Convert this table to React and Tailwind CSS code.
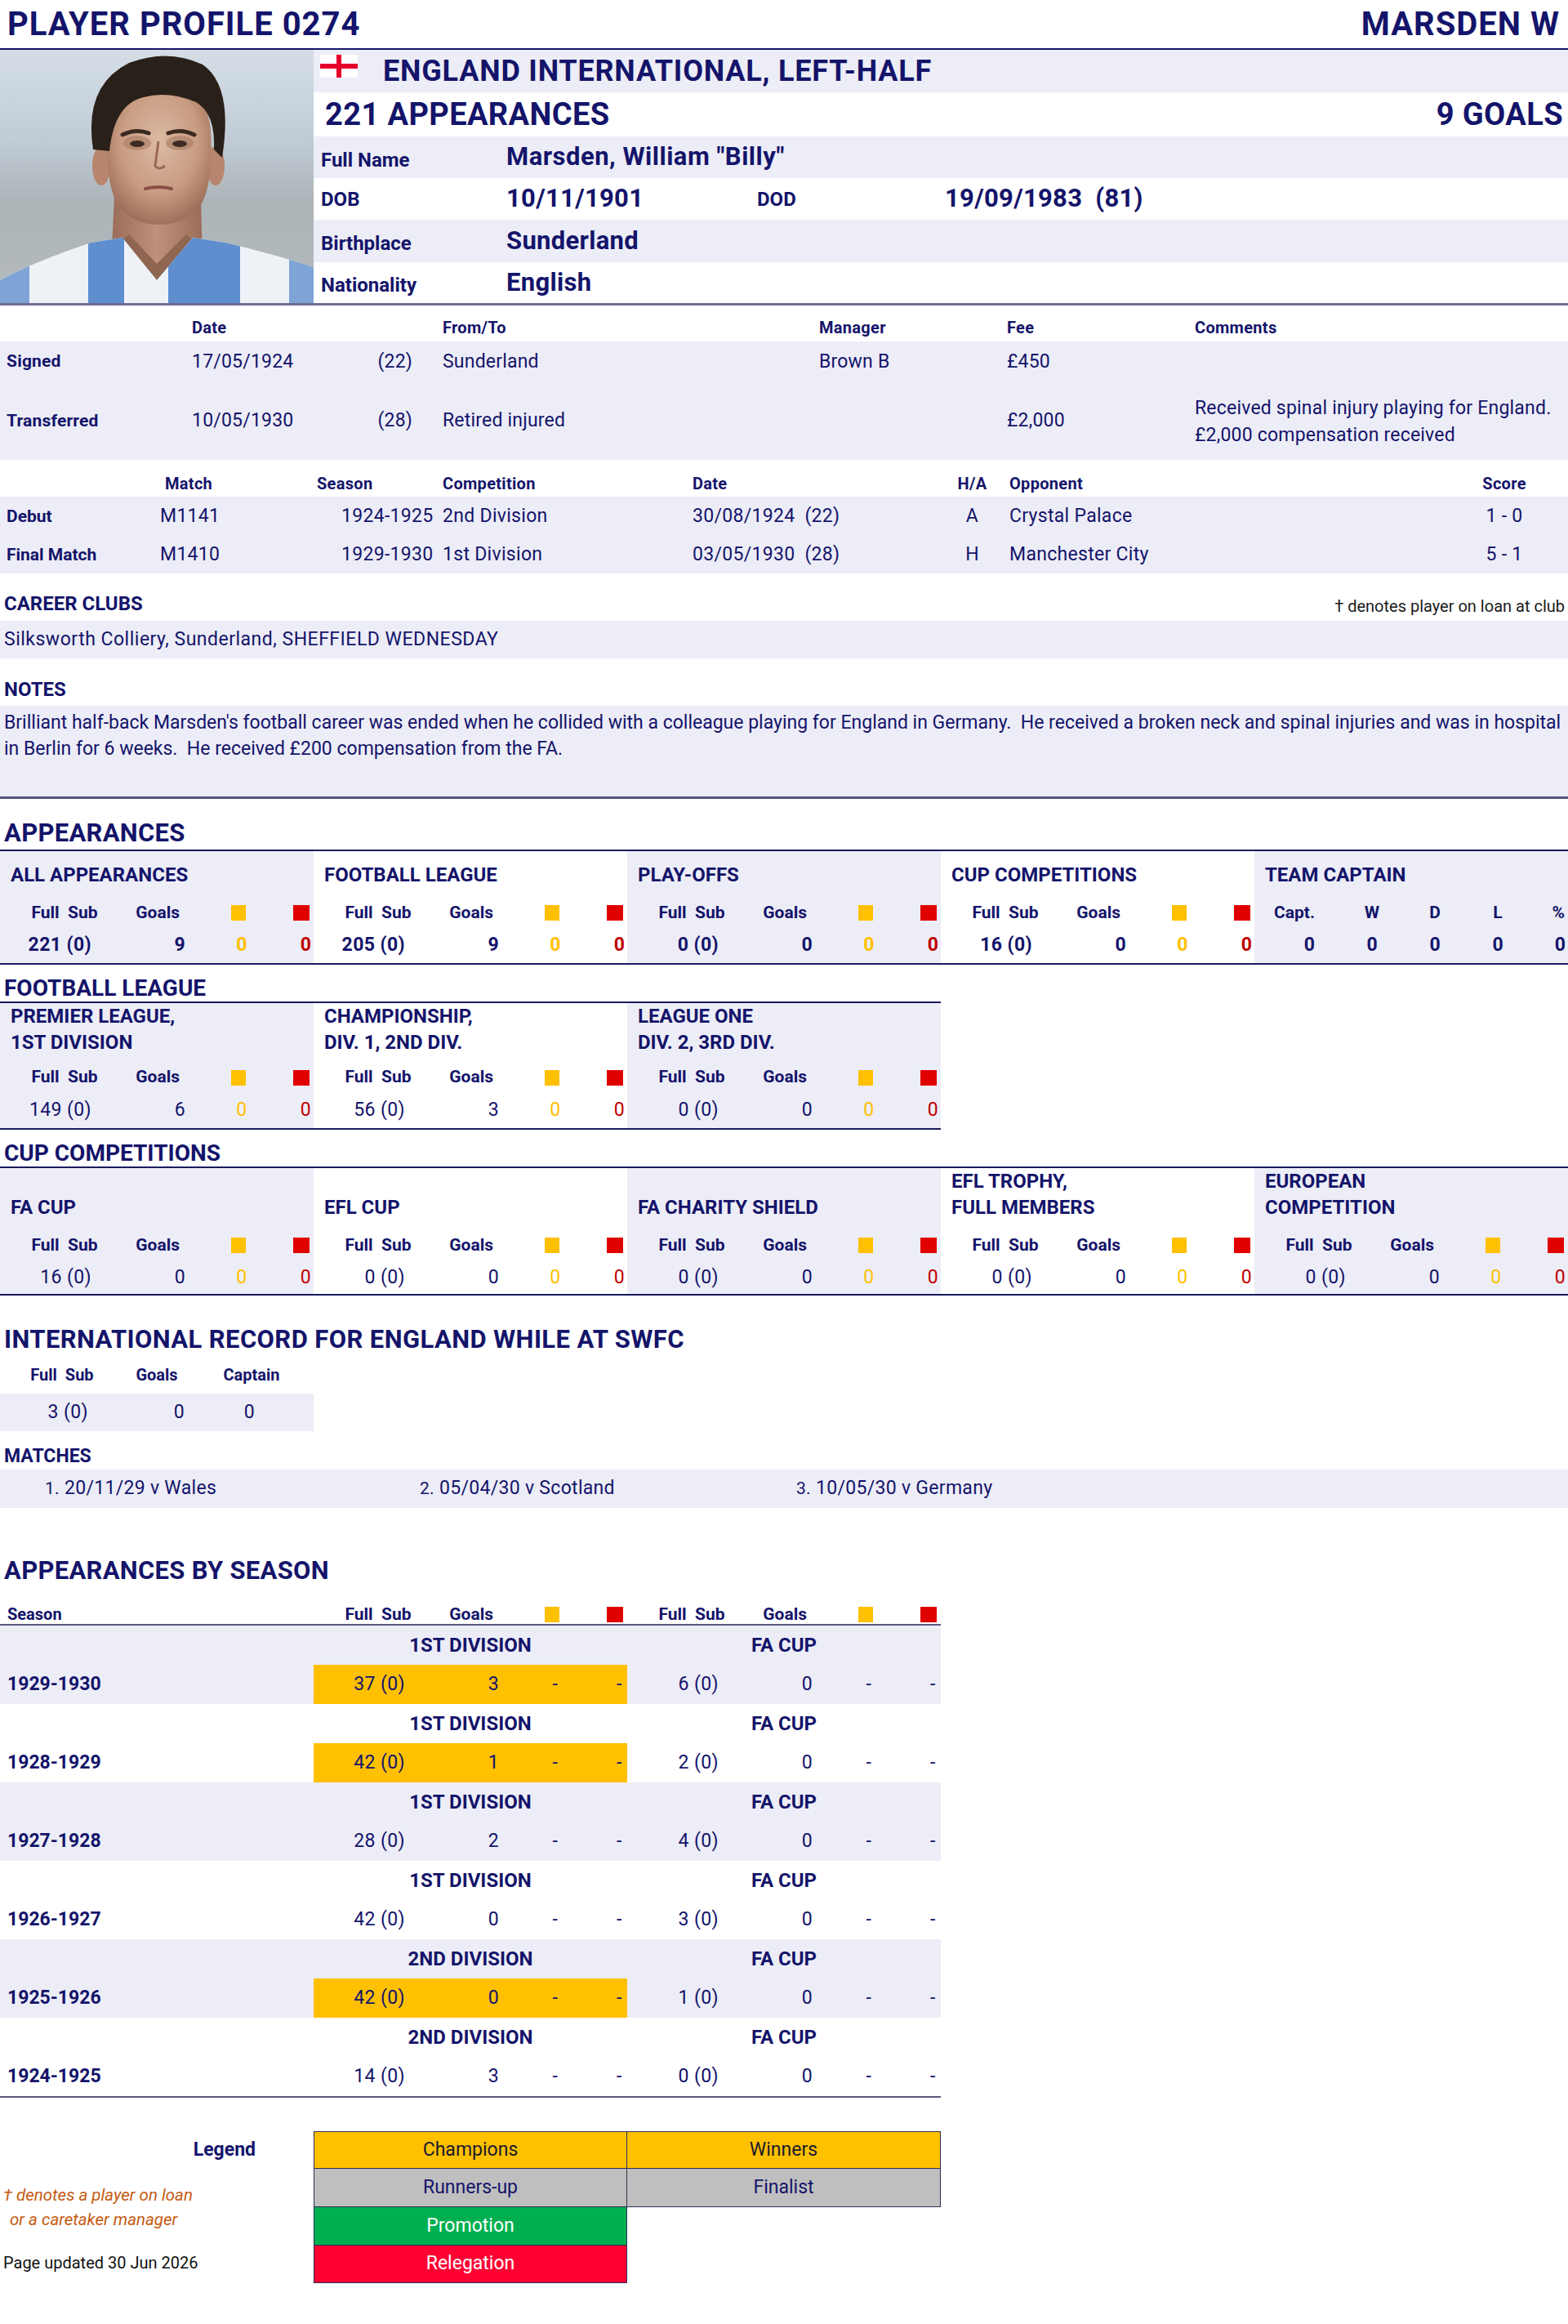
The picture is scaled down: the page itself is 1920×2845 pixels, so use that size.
import React from "react";

const Portrait = () => (
  <svg viewBox="0 0 384 310" className="block h-full w-full">
    <defs>
      <linearGradient id="pbg" x1="0" y1="0" x2="0" y2="1">
        <stop offset="0" stopColor="#d5dee7" />
        <stop offset="0.35" stopColor="#c1ccd6" />
        <stop offset="0.6" stopColor="#adb4b8" />
        <stop offset="1" stopColor="#b4babd" />
      </linearGradient>
      <radialGradient id="pskin" cx="0.5" cy="0.4" r="0.62">
        <stop offset="0" stopColor="#dcbaa3" />
        <stop offset="0.6" stopColor="#c89c82" />
        <stop offset="1" stopColor="#9c6c57" />
      </radialGradient>
      <linearGradient id="pneck" x1="0" y1="0" x2="1" y2="0">
        <stop offset="0" stopColor="#9a6d58" />
        <stop offset="0.5" stopColor="#c0917a" />
        <stop offset="1" stopColor="#9a6d58" />
      </linearGradient>
      <clipPath id="pshirt">
        <path d="M0 282 Q45 258 112 236 L150 230 L192 282 L236 230 L276 236 Q335 250 384 266 L384 310 L0 310 Z" />
      </clipPath>
    </defs>
    <rect width="384" height="310" fill="url(#pbg)" />
    <path d="M140 180 L136 262 L248 262 L246 180 Z" fill="url(#pneck)" />
    <path d="M150 232 L192 282 L236 232 L228 226 L192 262 L158 226 Z" fill="#8f6652" />
    <g clipPath="url(#pshirt)">
      <rect width="384" height="310" fill="#eef2f7" />
      <rect x="0" y="200" width="36" height="110" fill="#7ea4d6" />
      <rect x="108" y="200" width="44" height="110" fill="#5f8ecf" />
      <rect x="206" y="200" width="88" height="110" fill="#5f8ecf" />
      <rect x="354" y="200" width="30" height="110" fill="#7ea4d6" />
    </g>
    <ellipse cx="124" cy="142" rx="11" ry="24" fill="#b8866f" />
    <ellipse cx="264" cy="142" rx="11" ry="24" fill="#b8866f" />
    <path d="M132 96 Q132 46 194 44 Q256 46 258 100 Q262 160 246 190 Q226 214 194 214 Q162 214 144 190 Q128 160 132 96 Z" fill="url(#pskin)" />
    <path d="M114 122 Q102 44 158 16 Q206 -2 248 18 Q286 44 272 132 L262 122 Q264 78 240 64 Q206 50 176 58 Q140 66 134 124 Z" fill="#2a201a" />
    <ellipse cx="168" cy="114" rx="17" ry="9" fill="#a97a63" opacity="0.6" />
    <ellipse cx="220" cy="114" rx="17" ry="9" fill="#a97a63" opacity="0.6" />
    <path d="M150 104 Q166 96 182 102" stroke="#3a2a22" strokeWidth="5" fill="none" strokeLinecap="round" />
    <path d="M206 102 Q222 96 238 104" stroke="#3a2a22" strokeWidth="5" fill="none" strokeLinecap="round" />
    <ellipse cx="168" cy="115" rx="9" ry="4" fill="#3f2b23" />
    <ellipse cx="220" cy="115" rx="9" ry="4" fill="#3f2b23" />
    <path d="M194 112 L190 142 Q194 148 202 142" stroke="#9a6a55" strokeWidth="3" fill="none" />
    <path d="M178 170 Q194 166 210 170" stroke="#8a4f44" strokeWidth="4" fill="none" strokeLinecap="round" />
  </svg>
);

const Flag = () => (
  <svg width="46" height="28" viewBox="0 0 46 28" className="shrink-0">
    <rect width="46" height="28" fill="#ffffff" />
    <rect x="20" width="6" height="28" fill="#e4002b" />
    <rect y="11" width="46" height="6" fill="#e4002b" />
  </svg>
);

const StatHead = () => (
  <div className="flex items-center text-[21px] font-bold">
    <span className="w-[158px] whitespace-pre text-center">Full  Sub</span>
    <span className="w-[62px] text-right">Goals</span>
    <span className="ml-[63px] h-[19px] w-[18px] bg-[#ffc000]" />
    <span className="ml-[58px] h-[19px] w-[20px] bg-[#e00000]" />
  </div>
);

const StatVals = ({ apps, goals, y = "0", r = "0", bold, dash }) => (
  <div className={"flex items-center text-[23px] tracking-[0.4px] " + (bold ? "font-bold" : "")}>
    <span className="w-[112px] text-right">{apps}</span>
    <span className="w-[115px] text-right">{goals}</span>
    <span className={"w-[138px] text-center " + (dash ? "" : "text-[#ffc000]")}>{y}</span>
    <span className={"w-[19px] text-center " + (dash ? "" : "text-[#c00000]")}>{r}</span>
  </div>
);

const TopPanel = ({ title, bg, apps, goals }) => (
  <div className={"w-[384px] " + bg}>
    <div className="flex h-[58px] items-center pl-[13px] text-[24px] font-bold">{title}</div>
    <div className="flex h-[35px] items-center">
      <StatHead />
    </div>
    <div className="flex h-[44px] items-center">
      <StatVals apps={apps} goals={goals} bold />
    </div>
  </div>
);

const SubPanel = ({ lines, bg, apps, goals }) => (
  <div className={"w-[384px] " + bg}>
    <div className="flex h-[72px] flex-col pl-[13px] text-[24px] font-bold leading-[32px]">
      {lines.map((l) => (
        <span key={l}>{l}</span>
      ))}
    </div>
    <div className="flex h-[38px] items-center">
      <StatHead />
    </div>
    <div className="flex h-[43px] items-center">
      <StatVals apps={apps} goals={goals} />
    </div>
  </div>
);

const CupPanel = ({ lines, bg, apps, goals }) => (
  <div className={"w-[384px] " + bg}>
    <div className="flex h-[64px] flex-col justify-end pl-[13px] text-[24px] font-bold leading-[32px]">
      {lines.map((l) => (
        <span key={l}>{l}</span>
      ))}
    </div>
    <div className="flex h-[51px] items-end pb-[5px]">
      <StatHead />
    </div>
    <div className="flex h-[39px] items-center">
      <StatVals apps={apps} goals={goals} />
    </div>
  </div>
);

const seasons = [
  { s: "1929-1930", div: "1ST DIVISION", lg: ["37 (0)", "3"], cup: ["6 (0)", "0"], hl: true },
  { s: "1928-1929", div: "1ST DIVISION", lg: ["42 (0)", "1"], cup: ["2 (0)", "0"], hl: true },
  { s: "1927-1928", div: "1ST DIVISION", lg: ["28 (0)", "2"], cup: ["4 (0)", "0"] },
  { s: "1926-1927", div: "1ST DIVISION", lg: ["42 (0)", "0"], cup: ["3 (0)", "0"] },
  { s: "1925-1926", div: "2ND DIVISION", lg: ["42 (0)", "0"], cup: ["1 (0)", "0"], hl: true },
  { s: "1924-1925", div: "2ND DIVISION", lg: ["14 (0)", "3"], cup: ["0 (0)", "0"] },
];

const Heading = ({ children, className }) => (
  <div className={"flex items-end pl-[5px] font-bold " + className}>{children}</div>
);

export default function App() {
  return (
    <div className="w-[1920px] bg-white font-[Roboto,Arial,sans-serif] text-[#14146a]">
      {/* title bar */}
      <div className="flex h-[61px] items-center justify-between border-b-2 border-[#14146a] pl-[9px] pr-[10px] text-[40px] font-bold leading-none tracking-[1px]">
        <span>PLAYER PROFILE 0274</span>
        <span>MARSDEN W</span>
      </div>

      {/* profile */}
      <div className="flex h-[310px]">
        <div className="w-[384px] shrink-0">
          <Portrait />
        </div>
        <div className="flex flex-1 flex-col">
          <div className="flex h-[52px] items-center bg-[#ededf7] pl-[8px]">
            <div className="mb-[12px]">
              <Flag />
            </div>
            <span className="ml-[31px] text-[36px] font-bold tracking-[0.8px]">ENGLAND INTERNATIONAL, LEFT-HALF</span>
          </div>
          <div className="flex h-[54px] items-center justify-between pl-[14px] pr-[6px] text-[38px] font-bold tracking-[0.4px]">
            <span>221 APPEARANCES</span>
            <span>9 GOALS</span>
          </div>
          <div className="flex h-[51px] items-center bg-[#ededf7] pl-[9px] font-bold">
            <span className="w-[227px] pt-[6px] text-[24px]">Full Name</span>
            <span className="text-[31px] tracking-[0.5px]">Marsden, William "Billy"</span>
          </div>
          <div className="flex h-[51px] items-center pl-[9px] font-bold">
            <span className="w-[227px] text-[24px]">DOB</span>
            <span className="w-[307px] text-[31px] tracking-[0.3px]">10/11/1901</span>
            <span className="w-[230px] text-[24px]">DOD</span>
            <span className="text-[31px] tracking-[0.3px]">19/09/1983 &nbsp;(81)</span>
          </div>
          <div className="flex h-[52px] items-center bg-[#ededf7] pl-[9px] font-bold">
            <span className="w-[227px] pt-[6px] text-[24px]">Birthplace</span>
            <span className="text-[31px] tracking-[0.3px]">Sunderland</span>
          </div>
          <div className="flex h-[50px] items-center pl-[9px] font-bold">
            <span className="w-[227px] pt-[6px] text-[24px]">Nationality</span>
            <span className="text-[31px] tracking-[0.3px]">English</span>
          </div>
        </div>
      </div>
      <div className="h-[3px] bg-[#6e6e92]" />

      {/* transfers */}
      <div className="flex h-[44px] items-end pb-[2px] text-[20px] font-bold tracking-[0.3px]">
        <span className="w-[235px]" />
        <span className="w-[307px]">Date</span>
        <span className="w-[461px]">From/To</span>
        <span className="w-[230px]">Manager</span>
        <span className="w-[230px]">Fee</span>
        <span>Comments</span>
      </div>
      <div className="flex h-[50px] items-center bg-[#ededf7] text-[23px] tracking-[0.2px]">
        <span className="w-[235px] pl-[8px] text-[21px] font-bold">Signed</span>
        <span className="w-[220px]">17/05/1924</span>
        <span className="w-[50px] text-right">(22)</span>
        <span className="w-[37px]" />
        <span className="w-[461px]">Sunderland</span>
        <span className="w-[230px]">Brown B</span>
        <span className="w-[230px]">£450</span>
      </div>
      <div className="flex h-[95px] items-center bg-[#ededf7] text-[23px] tracking-[0.2px]">
        <span className="w-[235px] pl-[8px] text-[21px] font-bold">Transferred</span>
        <span className="w-[220px]">10/05/1930</span>
        <span className="w-[50px] text-right">(28)</span>
        <span className="w-[37px]" />
        <span className="w-[461px]">Retired injured</span>
        <span className="w-[230px]" />
        <span className="w-[230px]">£2,000</span>
        <span className="flex flex-col leading-[33px]">
          <span>Received spinal injury playing for England.</span>
          <span>£2,000 compensation received</span>
        </span>
      </div>

      {/* debut / final */}
      <div className="flex h-[45px] items-end pb-[1px] text-[20px] font-bold tracking-[0.3px]">
        <span className="w-[202px]" />
        <span className="w-[186px]">Match</span>
        <span className="w-[154px]">Season</span>
        <span className="w-[306px]">Competition</span>
        <span className="w-[323px]">Date</span>
        <span className="w-[39px] text-center">H/A</span>
        <span className="w-[26px]" />
        <span className="w-[578px]">Opponent</span>
        <span className="w-[56px] text-center">Score</span>
      </div>
      {[
        ["Debut", "M1141", "1924-1925", "2nd Division", "30/08/1924  (22)", "A", "Crystal Palace", "1 - 0", "h-[49px]"],
        ["Final Match", "M1410", "1929-1930", "1st Division", "03/05/1930  (28)", "H", "Manchester City", "5 - 1", "h-[45px]"],
      ].map((r) => (
        <div key={r[0]} className={"flex items-center bg-[#ededf7] text-[23px] tracking-[0.3px] " + r[8]}>
          <span className="w-[196px] pl-[8px] text-[21px] font-bold tracking-normal">{r[0]}</span>
          <span className="w-[192px]">{r[1]}</span>
          <span className="w-[154px] pl-[30px]">{r[2]}</span>
          <span className="w-[306px]">{r[3]}</span>
          <span className="w-[323px] whitespace-pre">{r[4]}</span>
          <span className="w-[39px] text-center">{r[5]}</span>
          <span className="w-[26px]" />
          <span className="w-[578px]">{r[6]}</span>
          <span className="w-[56px] whitespace-nowrap text-center">{r[7]}</span>
        </div>
      ))}

      {/* career clubs */}
      <div className="flex h-[58px] items-end justify-between pb-[3px] pl-[5px] pr-[4px]">
        <span className="text-[24px] font-bold">CAREER CLUBS</span>
        <span className="text-[20px] text-[#1a1a1a]">† denotes player on loan at club</span>
      </div>
      <div className="flex h-[46px] items-center bg-[#ededf7] pl-[5px] text-[23px] tracking-[0.5px]">
        Silksworth Colliery, Sunderland, SHEFFIELD WEDNESDAY
      </div>

      {/* notes */}
      <Heading className="h-[58px] pb-[2px] text-[24px]">NOTES</Heading>
      <div className="h-[114px] border-b-[3px] border-[#55557a] bg-[#ededf7] pl-[5px] pt-[5px] text-[23px] leading-[32px] whitespace-pre">
        <div>
          Brilliant half-back Marsden's football career was ended when he collided with a colleague playing for England in Germany.  He received a broken neck and spinal injuries and was in hospital
        </div>
        <div>in Berlin for 6 weeks.  He received £200 compensation from the FA.</div>
      </div>

      {/* appearances */}
      <Heading className="h-[62px] pb-[2px] text-[31px] leading-[36px] tracking-[0.3px]">APPEARANCES</Heading>
      <div className="flex border-y-2 border-[#1b1b5e]">
        <TopPanel title="ALL APPEARANCES" bg="bg-[#ededf7]" apps="221 (0)" goals="9" />
        <TopPanel title="FOOTBALL LEAGUE" bg="bg-white" apps="205 (0)" goals="9" />
        <TopPanel title="PLAY-OFFS" bg="bg-[#ededf7]" apps="0 (0)" goals="0" />
        <TopPanel title="CUP COMPETITIONS" bg="bg-white" apps="16 (0)" goals="0" />
        <div className="w-[384px] bg-[#ededf7]">
          <div className="flex h-[58px] items-center pl-[13px] text-[24px] font-bold">TEAM CAPTAIN</div>
          <div className="flex h-[35px] items-center text-[21px] font-bold">
            <span className="w-[74px] text-right">Capt.</span>
            <span className="ml-[40px] w-[60px] text-center">W</span>
            <span className="ml-[17px] w-[60px] text-center">D</span>
            <span className="ml-[17px] w-[60px] text-center">L</span>
            <span className="w-[56px] pr-[4px] text-right">%</span>
          </div>
          <div className="flex h-[44px] items-center text-[23px] font-bold">
            <span className="w-[74px] text-right">0</span>
            <span className="ml-[40px] w-[60px] text-center">0</span>
            <span className="ml-[17px] w-[60px] text-center">0</span>
            <span className="ml-[17px] w-[60px] text-center">0</span>
            <span className="w-[56px] pr-[3px] text-right">0</span>
          </div>
        </div>
      </div>

      {/* football league */}
      <Heading className="h-[45px] text-[28px] leading-[32px]">FOOTBALL LEAGUE</Heading>
      <div className="flex w-[1152px] border-y-2 border-[#1b1b5e]">
        <SubPanel lines={["PREMIER LEAGUE,", "1ST DIVISION"]} bg="bg-[#ededf7]" apps="149 (0)" goals="6" />
        <SubPanel lines={["CHAMPIONSHIP,", "DIV. 1, 2ND DIV."]} bg="bg-white" apps="56 (0)" goals="3" />
        <SubPanel lines={["LEAGUE ONE", "DIV. 2, 3RD DIV."]} bg="bg-[#ededf7]" apps="0 (0)" goals="0" />
      </div>

      {/* cup competitions */}
      <Heading className="h-[45px] text-[28px] leading-[32px]">CUP COMPETITIONS</Heading>
      <div className="flex border-y-2 border-[#1b1b5e]">
        <CupPanel lines={["FA CUP"]} bg="bg-[#ededf7]" apps="16 (0)" goals="0" />
        <CupPanel lines={["EFL CUP"]} bg="bg-white" apps="0 (0)" goals="0" />
        <CupPanel lines={["FA CHARITY SHIELD"]} bg="bg-[#ededf7]" apps="0 (0)" goals="0" />
        <CupPanel lines={["EFL TROPHY,", "FULL MEMBERS"]} bg="bg-white" apps="0 (0)" goals="0" />
        <CupPanel lines={["EUROPEAN", "COMPETITION"]} bg="bg-[#ededf7]" apps="0 (0)" goals="0" />
      </div>

      {/* international record */}
      <Heading className="h-[74px] pb-[2px] text-[31px] leading-[36px] tracking-[0.4px]">
        INTERNATIONAL RECORD FOR ENGLAND WHILE AT SWFC
      </Heading>
      <div className="flex h-[46px] items-center text-[20px] font-bold">
        <span className="w-[152px] whitespace-pre text-center">Full  Sub</span>
        <span className="w-[80px] text-center">Goals</span>
        <span className="w-[152px] text-center">Captain</span>
      </div>
      <div className="flex h-[46px] w-[384px] items-center bg-[#ededf7] text-[23px] tracking-[0.4px]">
        <span className="w-[108px] text-right">3 (0)</span>
        <span className="w-[118px] text-right">0</span>
        <span className="w-[86px] text-right">0</span>
      </div>
      <Heading className="h-[47px] text-[23px] leading-[33px]">MATCHES</Heading>
      <div className="flex h-[47px] items-center bg-[#ededf7] pl-[55px] text-[23px] tracking-[0.3px]">
        <span className="w-[459px]">
          <span className="text-[21px]">1.</span> 20/11/29 v Wales
        </span>
        <span className="w-[461px]">
          <span className="text-[21px]">2.</span> 05/04/30 v Scotland
        </span>
        <span>
          <span className="text-[21px]">3.</span> 10/05/30 v Germany
        </span>
      </div>

      {/* appearances by season */}
      <Heading className="h-[99px] pb-[4px] text-[31px] leading-[36px] tracking-[0.3px]">APPEARANCES BY SEASON</Heading>
      <div className="w-[1152px]">
        <div className="flex h-[45px] items-end border-b-2 border-[#5a5a80] leading-[24px]">
          <span className="w-[384px] pl-[9px] text-[20px] font-bold">Season</span>
          <div className="w-[384px]">
            <StatHead />
          </div>
          <div className="w-[384px]">
            <StatHead />
          </div>
        </div>
        {seasons.map((s, i) => (
          <div key={s.s} className={i % 2 === 0 ? "bg-[#ededf7]" : "bg-white"}>
            <div className="flex h-[48px] items-center text-[24px] font-bold">
              <span className="w-[384px]" />
              <span className="w-[384px] text-center">{s.div}</span>
              <span className="w-[384px] text-center">FA CUP</span>
            </div>
            <div className="flex h-[48px] items-center">
              <span className="w-[384px] pl-[9px] text-[23px] font-bold">{s.s}</span>
              <div className={"flex h-full w-[384px] items-center " + (s.hl ? "bg-[#ffc000]" : "")}>
                <StatVals apps={s.lg[0]} goals={s.lg[1]} y="-" r="-" dash />
              </div>
              <div className="flex h-full w-[384px] items-center">
                <StatVals apps={s.cup[0]} goals={s.cup[1]} y="-" r="-" dash />
              </div>
            </div>
          </div>
        ))}
        <div className="h-[2px] bg-[#5a5a80]" />
      </div>

      {/* legend */}
      <div className="mt-[41px] flex">
        <div className="flex w-[384px] flex-col">
          <div className="flex h-[46px] items-center justify-end pr-[71px] text-[23px] font-bold">Legend</div>
          <div className="flex h-[94px] flex-col justify-center pl-[4px] text-[20.5px] italic leading-[30px] text-[#c55a11]">
            <span>† denotes a player on loan</span>
            <span className="pl-[8px]">or a caretaker manager</span>
          </div>
          <div className="flex h-[46px] items-start pl-[4px] pt-[6px] text-[20px] text-[#111111]">
            Page updated 30 Jun 2026
          </div>
        </div>
        <div className="grid w-[768px] grid-cols-2 text-[23px]">
          <div className="flex h-[46px] items-center justify-center border border-[#2e2e55] bg-[#ffc000] text-[#1a1a2a]">Champions</div>
          <div className="flex h-[46px] items-center justify-center border border-l-0 border-[#2e2e55] bg-[#ffc000] text-[#1a1a2a]">Winners</div>
          <div className="flex h-[47px] items-center justify-center border border-t-0 border-[#2e2e55] bg-[#bfbfbf]">Runners-up</div>
          <div className="flex h-[47px] items-center justify-center border border-l-0 border-t-0 border-[#2e2e55] bg-[#bfbfbf]">Finalist</div>
          <div className="flex h-[47px] items-center justify-center border border-t-0 border-[#2e2e55] bg-[#00b050] text-white">Promotion</div>
          <div />
          <div className="flex h-[46px] items-center justify-center border border-t-0 border-[#2e2e55] bg-[#ff0033] text-white">Relegation</div>
          <div />
        </div>
      </div>
      <div className="h-[48px]" />
    </div>
  );
}
